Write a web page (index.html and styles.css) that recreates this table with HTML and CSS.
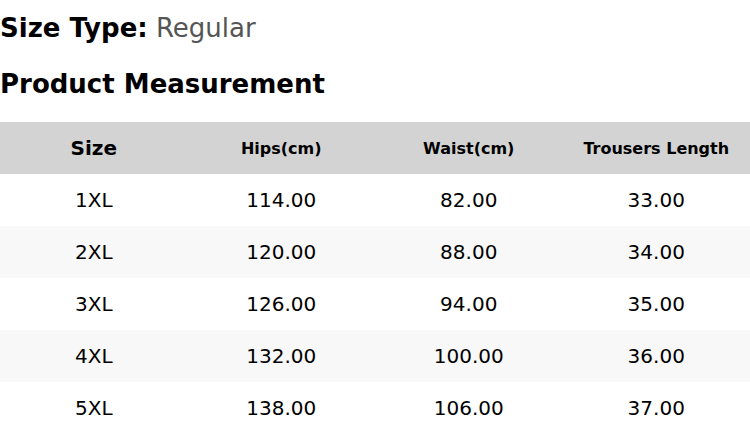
FILE: index.html
```html
<!DOCTYPE html>
<html>
<head>
<meta charset="utf-8">
<link rel="stylesheet" href="styles.css">
</head>
<body>
<div class="page">
  <div class="size-type"><span class="label">Size Type:</span> <span class="value">Regular</span></div>
  <h2 class="title">Product Measurement</h2>
  <table class="measure">
    <thead>
      <tr>
        <th class="main">Size</th>
        <th>Hips(cm)</th>
        <th>Waist(cm)</th>
        <th>Trousers Length</th>
      </tr>
    </thead>
    <tbody>
      <tr><td>1XL</td><td>114.00</td><td>82.00</td><td>33.00</td></tr>
      <tr><td>2XL</td><td>120.00</td><td>88.00</td><td>34.00</td></tr>
      <tr><td>3XL</td><td>126.00</td><td>94.00</td><td>35.00</td></tr>
      <tr><td>4XL</td><td>132.00</td><td>100.00</td><td>36.00</td></tr>
      <tr><td>5XL</td><td>138.00</td><td>106.00</td><td>37.00</td></tr>
    </tbody>
  </table>
</div>
</body>
</html>
```
FILE: styles.css
```css
html, body { margin: 0; padding: 0; background: #fff; }
body { font-family: "DejaVu Sans", Verdana, sans-serif; color: #000; }
.page { width: 750px; }
.size-type { font-size: 26px; line-height: 56px; }
.size-type .label { font-weight: bold; }
.size-type .value { color: #555; }
.title { margin: 0; font-size: 26px; font-weight: bold; line-height: 56px; }
.measure { width: 750px; border-collapse: collapse; table-layout: fixed; margin-top: 10px; }
.measure th { background: #d3d3d3; height: 52px; padding: 0; font-size: 16px; font-weight: bold; text-align: center; }
.measure th.main { font-size: 20px; }
.measure td { height: 52px; padding: 0; font-size: 20px; text-align: center; }
.measure tbody tr:nth-child(even) td { background: #f8f8f8; }
```
